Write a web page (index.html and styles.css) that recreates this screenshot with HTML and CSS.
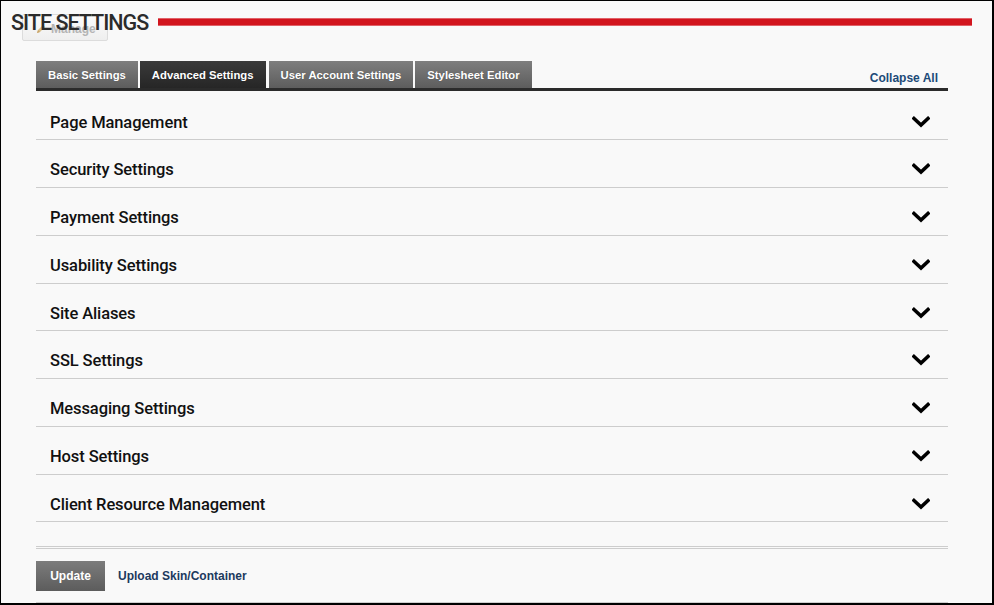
FILE: index.html
```html
<!DOCTYPE html>
<html>
<head>
<meta charset="utf-8">
<link rel="stylesheet" href="styles.css">
</head>
<body>
<div class="frame">
  <div class="header">
    <div class="manage-btn">
      <svg class="pencil" width="10" height="10" viewBox="0 0 10 10"><path d="M1 9 L2 6 L7 1 L9 3 L4 8 Z" fill="#d8c08a"/><path d="M1 9 L2 6 L4 8 Z" fill="#c9a36a"/></svg>
      <span>Manage</span>
    </div>
    <h1 class="title">SITE SETTINGS</h1>
    <div class="redbar"></div>
  </div>
  <div class="content">
    <div class="tabbar">
      <ul class="tabs">
        <li class="tab">Basic Settings</li>
        <li class="tab active">Advanced Settings</li>
        <li class="tab">User Account Settings</li>
        <li class="tab">Stylesheet Editor</li>
      </ul>
      <a class="collapse">Collapse All</a>
    </div>
    <div class="sections">
      <div class="row"><span class="label">Page Management</span><svg class="chev" width="18" height="12" viewBox="0 0 18 12"><path d="M2 2.5 L9 9 L16 2.5" fill="none" stroke="#000" stroke-width="3.6" stroke-linecap="square"/></svg></div>
      <div class="row"><span class="label">Security Settings</span><svg class="chev" width="18" height="12" viewBox="0 0 18 12"><path d="M2 2.5 L9 9 L16 2.5" fill="none" stroke="#000" stroke-width="3.6" stroke-linecap="square"/></svg></div>
      <div class="row"><span class="label">Payment Settings</span><svg class="chev" width="18" height="12" viewBox="0 0 18 12"><path d="M2 2.5 L9 9 L16 2.5" fill="none" stroke="#000" stroke-width="3.6" stroke-linecap="square"/></svg></div>
      <div class="row"><span class="label">Usability Settings</span><svg class="chev" width="18" height="12" viewBox="0 0 18 12"><path d="M2 2.5 L9 9 L16 2.5" fill="none" stroke="#000" stroke-width="3.6" stroke-linecap="square"/></svg></div>
      <div class="row"><span class="label">Site Aliases</span><svg class="chev" width="18" height="12" viewBox="0 0 18 12"><path d="M2 2.5 L9 9 L16 2.5" fill="none" stroke="#000" stroke-width="3.6" stroke-linecap="square"/></svg></div>
      <div class="row"><span class="label">SSL Settings</span><svg class="chev" width="18" height="12" viewBox="0 0 18 12"><path d="M2 2.5 L9 9 L16 2.5" fill="none" stroke="#000" stroke-width="3.6" stroke-linecap="square"/></svg></div>
      <div class="row"><span class="label">Messaging Settings</span><svg class="chev" width="18" height="12" viewBox="0 0 18 12"><path d="M2 2.5 L9 9 L16 2.5" fill="none" stroke="#000" stroke-width="3.6" stroke-linecap="square"/></svg></div>
      <div class="row"><span class="label">Host Settings</span><svg class="chev" width="18" height="12" viewBox="0 0 18 12"><path d="M2 2.5 L9 9 L16 2.5" fill="none" stroke="#000" stroke-width="3.6" stroke-linecap="square"/></svg></div>
      <div class="row"><span class="label">Client Resource Management</span><svg class="chev" width="18" height="12" viewBox="0 0 18 12"><path d="M2 2.5 L9 9 L16 2.5" fill="none" stroke="#000" stroke-width="3.6" stroke-linecap="square"/></svg></div>
    </div>
    <div class="actions">
      <button class="update">Update</button>
      <a class="upload">Upload Skin/Container</a>
    </div>
  </div>
</div>
</body>
</html>
```
FILE: styles.css
```css
* { box-sizing: border-box; }
html, body { margin: 0; padding: 0; }
body { width: 994px; height: 605px; overflow: hidden; background: #fff; font-family: "Liberation Sans", Arial, sans-serif; }
.frame {
  width: 994px; height: 605px;
  border-style: solid; border-color: #000;
  border-width: 1px 2px 2px 1px;
  background: #f9f9f9;
  overflow: hidden;
}
.header {
  position: relative;
  display: flex; align-items: center;
  height: 42px;
  padding: 0 20px 0 10px;
}
.manage-btn {
  position: absolute; left: 21px; top: 13px;
  width: 86px; height: 27px;
  border: 1px solid #dcdcdc; border-radius: 2px;
  background: linear-gradient(#fbfbfb, #efefef);
  display: flex; align-items: center; padding: 3px 0 0 13px; gap: 5px;
  color: #b5b5b5; font-size: 12px; font-weight: bold;
  z-index: 0;
}
.pencil { flex: none; }
.title {
  position: relative; z-index: 1;
  margin: 0; padding-top: 1px;
  font-family: Roboto, "Noto Sans", sans-serif; font-weight: 500;
  font-size: 21.5px; color: #2b2b2b; letter-spacing: -1px;
  line-height: 24px;
}
.redbar {
  flex: 1; height: 8px; margin-left: 10px;
  background: #d2151e;
  border-top: 1px solid #e06168; border-bottom: 1px solid #e06168;
}
.content { padding: 0 44px 0 35px; }
.tabbar {
  margin-top: 18px;
  display: flex; align-items: flex-end; justify-content: space-between;
  border-bottom: 3px solid #2b2b2b;
}
.tabs { list-style: none; margin: 0; padding: 0; display: flex; gap: 2px; }
.tab {
  height: 27px; padding: 0 12px;
  display: flex; align-items: center;
  background: linear-gradient(#7e7e7e, #5d5d5d);
  color: #fff; font-size: 11.3px; font-weight: bold;
  text-shadow: 0 0 1px rgba(0,0,0,0.3);
}
.tab.active { background: linear-gradient(#3a3a3a, #262626); }
.tabs .tab:nth-child(3) { margin-left: 1px; }
.collapse {
  color: #1c4a78; font-size: 12px; font-weight: bold;
  margin-right: 10px; margin-bottom: 3px;
}
.sections { padding-top: 1.5px; }
.row {
  height: 47.75px;
  border-bottom: 1px solid #cdcdcd;
  display: flex; justify-content: space-between; align-items: flex-start;
  padding: 19px 18px 0 14px;
}
.label {
  font-family: Roboto, "Noto Sans", sans-serif; font-weight: 500;
  font-size: 16.5px; line-height: 22px; color: #111; letter-spacing: -0.1px;
}
.chev { margin-top: 4px; }
.actions {
  margin-top: 24px;
  border-top: 3px double #cdcdcd;
  border-bottom: 1px solid #cdcdcd;
  padding: 12px 0 11px;
  display: flex; align-items: center; gap: 13px;
}
.update {
  width: 69px; height: 30px; border: 0; margin: 0; padding: 0;
  background: linear-gradient(#7c7c7c, #5c5c5c);
  color: #fff; font-family: "Liberation Sans", Arial, sans-serif;
  font-size: 12px; font-weight: bold;
}
.upload { color: #1c3a5e; font-size: 12px; font-weight: bold; }
```
